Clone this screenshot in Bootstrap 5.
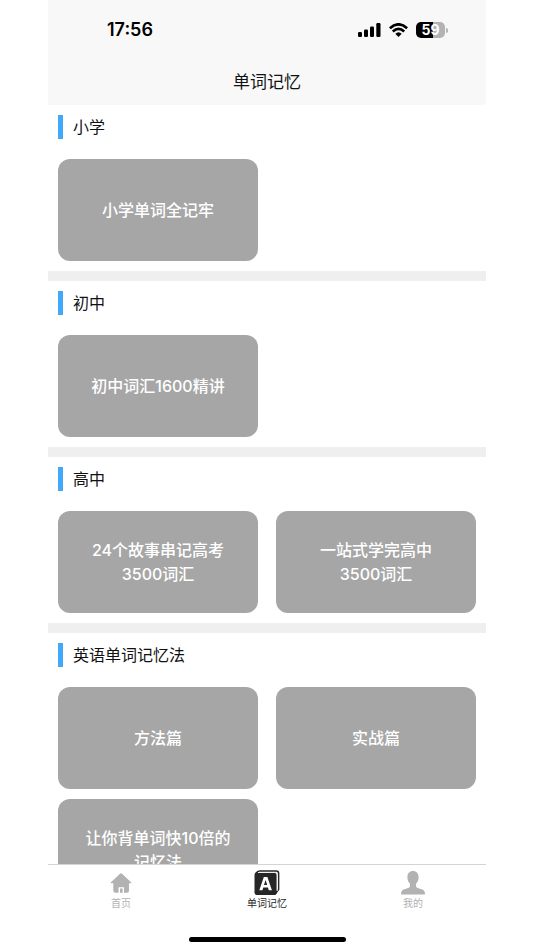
<!DOCTYPE html>
<html lang="zh-CN">
<head>
<meta charset="utf-8">
<meta name="viewport" content="width=device-width, initial-scale=1">
<title>单词记忆</title>
<link href="https://cdn.jsdelivr.net/npm/bootstrap@5.3.0/dist/css/bootstrap.min.css" rel="stylesheet">
<style>
  body { font-family: Inter, "Noto Sans CJK SC", sans-serif; color: #111; padding: 0 48px; }
  .top-area { background: #f8f8f8; }
  .status-bar { height: 60px; padding: 0 38px 0 59px; }
  .clock { font-size: 18px; line-height: 24px; font-weight: 600; color: #000; }
  .battery { width: 29px; height: 16px; border-radius: 5px; font-size: 14px; line-height: 16px; font-weight: 700; color: #fff; background: linear-gradient(90deg, #000 59%, #b3b3b3 59%); }
  .battery-tip { width: 2px; height: 5px; margin-left: 1px; border-radius: 0 2px 2px 0; background: #b3b3b3; }
  .page-title { font-size: 17px; line-height: 25px; padding: 10px 0; }
  .feed { min-height: 0; scrollbar-width: none; }
  .feed::-webkit-scrollbar { display: none; }
  .lesson-group { padding: 10px; }
  .lesson-group + .lesson-group { border-top: 10px solid #efefef; }
  .group-title { font-size: 16px; line-height: 24px; font-weight: 400; margin-bottom: 20px; border-left: 5px solid #42a8fb; padding-left: 10px; }
  .lesson-grid { display: grid; grid-template-columns: 1fr 1fr; gap: 10px 18px; }
  .lesson { min-height: 102px; padding: 10px 24px; border: 0; border-radius: 12px; background: #a6a6a6; color: #fff; font-size: 16px; line-height: 24px; font-weight: 500; }
  .lesson:hover, .lesson:active { background: #999; color: #fff; }
  .tab-bar { border-top: 1px solid #d4d4d4; }
  .tab-row { padding-bottom: 12px; }
  .tab-link { color: #b2b2b2; font-size: 10px; line-height: 14px; padding: 5px 0 0; }
  .tab-link.active { color: #262626; }
  .tab-link:hover { color: #666; }
  .home-area { height: 28px; padding-top: 6px; }
  .home-line { width: 157px; height: 5px; background: #000; }
</style>
<script src="https://cdn.jsdelivr.net/npm/bootstrap@5.3.0/dist/js/bootstrap.bundle.min.js" defer></script>
</head>
<body class="bg-white">
<div class="d-flex flex-column vh-100">
  <header class="top-area">
    <div class="status-bar d-flex align-items-center justify-content-between">
      <span class="clock">17:56</span>
      <div class="d-flex align-items-center">
        <svg class="me-2" width="23" height="14" viewBox="0 0 23 14" aria-hidden="true">
          <rect x="0" y="9" width="4" height="5" rx="1.2"/><rect x="6" y="6.5" width="4" height="7.5" rx="1.2"/><rect x="12" y="3.5" width="4" height="10.5" rx="1.2"/><rect x="18.300" y="0" width="4.200" height="14" rx="1.2"/>
        </svg>
        <svg class="me-2" width="19" height="14" viewBox="0 0 19 14" aria-hidden="true">
          <g fill="none" stroke="#000" stroke-width="2.700"><path d="M0.900 5.200Q9.500-2.500 18.100 5.200"/><path d="M3.800 8.600Q9.500 3.300 15.200 8.600"/></g>
          <path d="M6.300 10.700Q9.500 7.700 12.700 10.700L9.500 14Z"/>
        </svg>
        <span class="battery text-center">59</span><span class="battery-tip"></span>
      </div>
    </div>
    <h1 class="page-title text-center mb-0 fw-normal">单词记忆</h1>
  </header>

  <main class="feed flex-grow-1 overflow-auto">
    <section class="lesson-group">
      <h2 class="group-title">小学</h2>
      <div class="lesson-grid">
        <button type="button" class="btn lesson">小学单词全记牢</button>
      </div>
    </section>
    <section class="lesson-group">
      <h2 class="group-title">初中</h2>
      <div class="lesson-grid">
        <button type="button" class="btn lesson">初中词汇1600精讲</button>
      </div>
    </section>
    <section class="lesson-group">
      <h2 class="group-title">高中</h2>
      <div class="lesson-grid">
        <button type="button" class="btn lesson">24个故事串记高考<br>3500词汇</button>
        <button type="button" class="btn lesson">一站式学完高中<br>3500词汇</button>
      </div>
    </section>
    <section class="lesson-group">
      <h2 class="group-title">英语单词记忆法</h2>
      <div class="lesson-grid">
        <button type="button" class="btn lesson">方法篇</button>
        <button type="button" class="btn lesson">实战篇</button>
        <button type="button" class="btn lesson">让你背单词快10倍的<br>记忆法</button>
      </div>
    </section>
  </main>

  <footer class="tab-bar bg-white">
    <nav class="nav nav-fill flex-nowrap tab-row" aria-label="主导航">
      <a class="nav-item nav-link tab-link d-flex flex-column align-items-center w-100" href="#home">
        <svg width="26" height="26" viewBox="0 0 26 26" fill="currentColor" aria-hidden="true"><path d="M13 3.200Q13.500 3.200 14 3.700L23.300 12.500Q23.800 13.200 23 13.200H21V20.500Q21 22.800 19 22.800H16V17.300H10.500V22.800H7.500Q5.300 22.800 5.300 20.500V13.200H3Q2.200 13.200 2.700 12.500L12 3.700Q12.500 3.200 13 3.200Z"/><path d="M12 18.500H14.600V22.800H12Z"/></svg>
        首页
      </a>
      <a class="nav-item nav-link tab-link active d-flex flex-column align-items-center w-100" href="#words" aria-current="page">
        <svg width="26" height="26" viewBox="0 0 26 26" aria-hidden="true"><path d="M2 3.200Q3.500 0.900 5.500 0.900H22.300Q24.600 0.900 24.600 3.200V19.500L21.500 23.500" fill="none" stroke="#262626" stroke-width="1.500" stroke-linejoin="round"/><rect x="0.500" y="2.300" width="22.300" height="22.700" rx="2.800" fill="#262626"/><path d="M4 2.500H20.800Q23.200 2.500 23.200 4.900V21" fill="none" stroke="#fff" stroke-width="0.900"/><path d="M5.300 20.300L9.800 7H13.400L17.900 20.300H14.800L13.900 17.400H9.300L8.400 20.300ZM10 15H13.200L11.600 9.900Z" fill="#fff"/></svg>
        单词记忆
      </a>
      <a class="nav-item nav-link tab-link d-flex flex-column align-items-center w-100" href="#me">
        <svg width="26" height="26" viewBox="0 0 26 26" fill="currentColor" aria-hidden="true"><path d="M13 1C16.500 1 18.600 3.300 18.600 7.200C18.600 10 17.600 12 16 13.800V16.300C16.500 18.500 20 18.500 22.500 19.600C24.300 20.400 25 22 25 24.500H1C1 22 1.700 20.400 3.500 19.600C6 18.500 9.500 18.500 10 16.300V13.800C8.400 12 7.400 10 7.400 7.200C7.400 3.300 9.500 1 13 1Z"/></svg>
        我的
      </a>
    </nav>
    <div class="home-area d-flex justify-content-center align-items-center">
      <span class="home-line rounded-pill"></span>
    </div>
  </footer>
</div>
</body>
</html>
